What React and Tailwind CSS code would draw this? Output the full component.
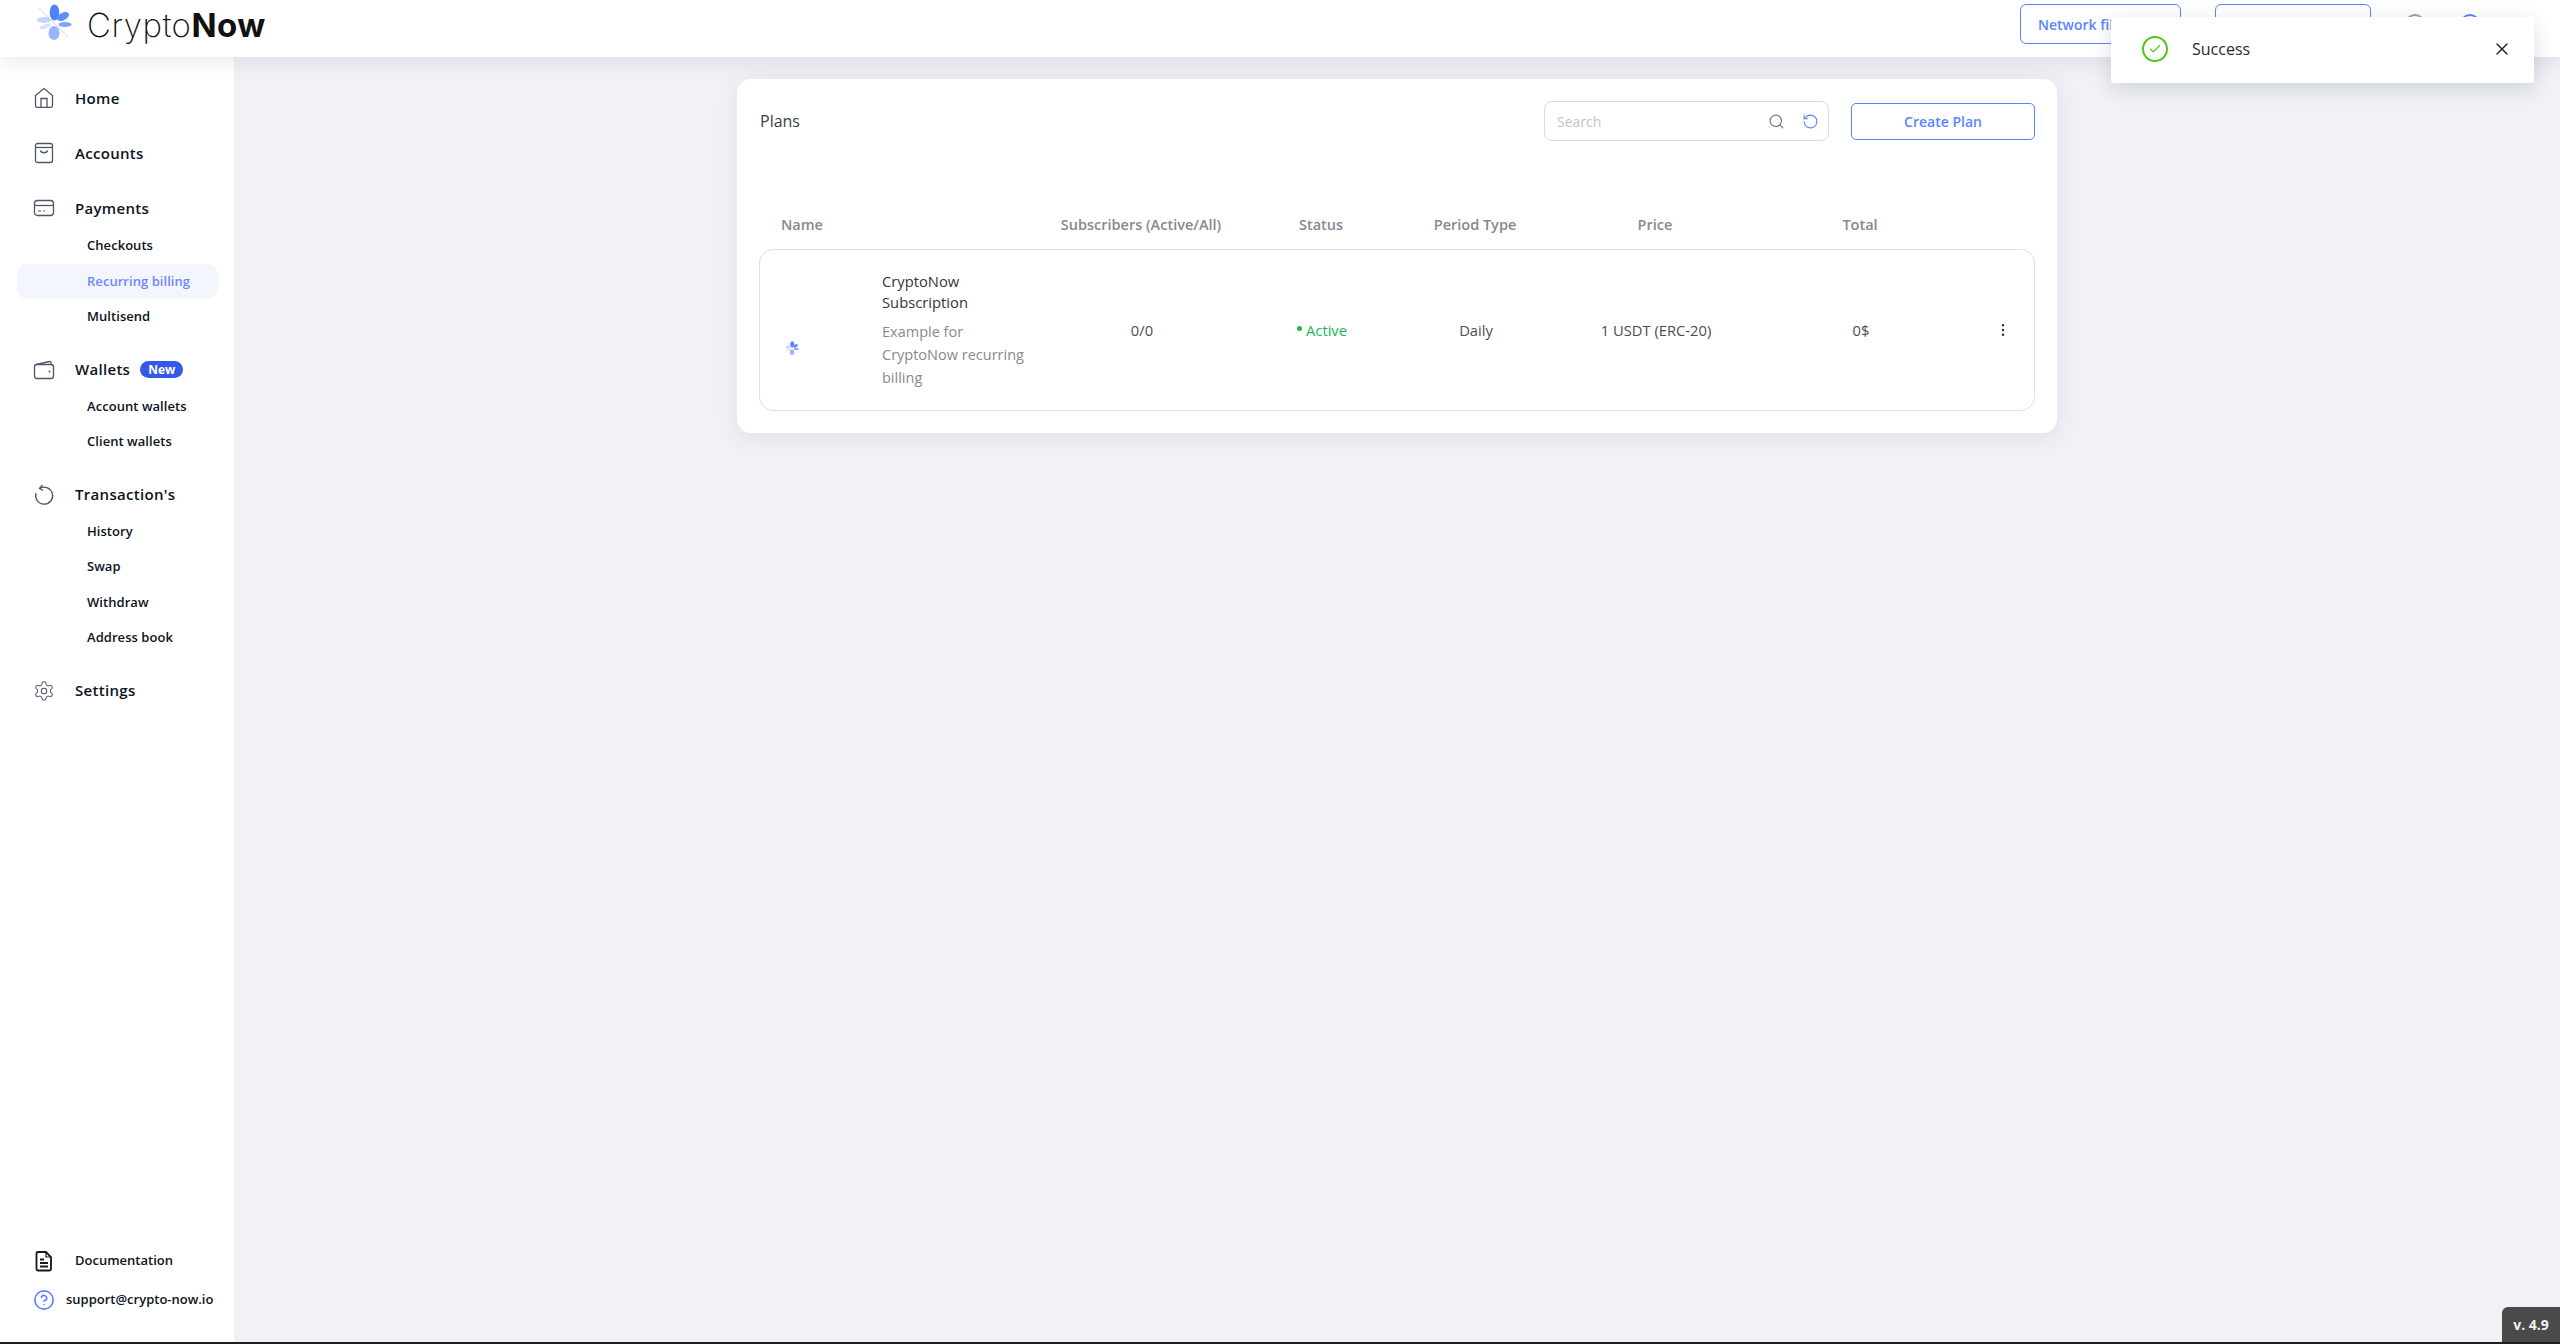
import React from "react";
import { Search, RotateCcw, EllipsisVertical, X, Check, CircleHelp } from "lucide-react";

const Logo = ({ className }) => (
  <svg viewBox="0 0 36 36" className={className}>
    <line x1="3" y1="4" x2="32" y2="33" stroke="#c9d8ff" strokeWidth="1" />
    <ellipse cx="18.5" cy="8.5" rx="4.8" ry="8" fill="#4f81ff" />
    <ellipse cx="27" cy="12.5" rx="6.5" ry="3.8" fill="#5f8dff" transform="rotate(-28 27 12.5)" />
    <ellipse cx="29" cy="20.5" rx="6.5" ry="2.4" fill="#7ea3ff" />
    <ellipse cx="18" cy="29" rx="5.5" ry="7" fill="#98b6ff" />
    <ellipse cx="8" cy="16" rx="7" ry="3" fill="#c4d5ff" />
    <ellipse cx="9" cy="22.5" rx="6" ry="2" fill="#d3e0ff" transform="rotate(-20 9 22.5)" />
  </svg>
);

const iconCls = "w-[22px] h-[22px] text-[#4b5666]";

const HomeIcon = () => (
  <svg viewBox="0 0 22 22" fill="none" stroke="currentColor" strokeWidth="1.3" className={iconCls}>
    <path d="M2.5 8.6 11 1.6l8.500 7v10a1.700 1.700 0 0 1-1.700 1.700H4.200a1.700 1.700 0 0 1-1.700-1.700z" />
    <path d="M8 20.300v-8.800h6v8.800" />
  </svg>
);

const BagIcon = () => (
  <svg viewBox="0 0 22 22" fill="none" stroke="currentColor" strokeWidth="1.3" className={iconCls}>
    <rect x="2.500" y="1.500" width="17" height="19" rx="2" />
    <path d="M2.500 5.500h17" />
    <path d="M7.500 8.500c.6 3 6.400 3 7 0" />
  </svg>
);

const CardIcon = () => (
  <svg viewBox="0 0 22 22" fill="none" stroke="currentColor" strokeWidth="1.3" className={iconCls}>
    <rect x="1.500" y="3.500" width="19" height="15" rx="3" />
    <path d="M1.500 8.500h19" />
    <path d="M5 14h3M10 14h2" strokeWidth="1" />
  </svg>
);

const WalletIcon = () => (
  <svg viewBox="0 0 22 22" fill="none" stroke="currentColor" strokeWidth="1.3" className={iconCls}>
    <path d="M3 5.500 16.500 2.500c.8-.2 1.500.3 1.500 1.200v2" />
    <rect x="1.500" y="5.500" width="19" height="14" rx="2.500" />
    <circle cx="16.500" cy="12.500" r="1" fill="currentColor" stroke="none" />
  </svg>
);

const HistoryIcon = () => (
  <svg viewBox="0 0 22 22" fill="none" stroke="currentColor" strokeWidth="1.3" className={iconCls}>
    <path d="M7 4.300a8.500 8.500 0 1 1-4 5" />
    <path d="M9.500 1 6.500 4.300l3.500 2.200" />
  </svg>
);

const GearIcon = () => (
  <svg viewBox="0 0 24 24" fill="none" stroke="currentColor" strokeWidth="1.100" className="w-[24px] h-[24px] text-[#4b5666]">
    <path d="M12.200 2h-.440a2 2 0 0 0-2 2v.180a2 2 0 0 1-1 1.730l-.430.250a2 2 0 0 1-2 0l-.150-.080a2 2 0 0 0-2.730.730l-.220.380a2 2 0 0 0 .730 2.730l.150.100a2 2 0 0 1 1 1.720v.510a2 2 0 0 1-1 1.740l-.150.090a2 2 0 0 0-.730 2.730l.220.380a2 2 0 0 0 2.730.730l.150-.080a2 2 0 0 1 2 0l.430.250a2 2 0 0 1 1 1.730V20a2 2 0 0 0 2 2h.440a2 2 0 0 0 2-2v-.180a2 2 0 0 1 1-1.730l.430-.250a2 2 0 0 1 2 0l.150.080a2 2 0 0 0 2.730-.730l.220-.390a2 2 0 0 0-.730-2.730l-.150-.080a2 2 0 0 1-1-1.740v-.500a2 2 0 0 1 1-1.740l.150-.090a2 2 0 0 0 .730-2.730l-.220-.380a2 2 0 0 0-2.730-.730l-.150.080a2 2 0 0 1-2 0l-.430-.250a2 2 0 0 1-1-1.730V4a2 2 0 0 0-2-2z" />
    <circle cx="12" cy="12" r="3" />
  </svg>
);

const DocIcon = () => (
  <svg viewBox="0 0 22 22" fill="none" stroke="#161616" strokeWidth="1.800" className="w-[22px] h-[22px]">
    <path d="M5 2h8l5 5v12a1.500 1.500 0 0 1-1.500 1.500h-11.500A1.500 1.500 0 0 1 3.500 19V3.500A1.500 1.500 0 0 1 5 2z" />
    <path d="M13 2v5h5" strokeWidth="1.200" />
    <path d="M7 9.500h4M7 13h8M7 16.500h8" />
  </svg>
);

const NavGroup = ({ icon, label, badge, subs = [], active, className = "", subsClass = "mt-[2px]" }) => (
  <div className={className}>
    <div className="h-[36px] flex items-center pl-[33px]">
      <span className="w-[22px] flex justify-center">{icon}</span>
      <span className="ml-[20px] text-[15px] font-semibold text-[#0c1422] tracking-[0.3px]">{label}</span>
      {badge && (
        <span className="ml-[10px] h-[17px] px-[8px] rounded-full bg-[#3558e8] text-white text-[12px] font-bold flex items-center">
          {badge}
        </span>
      )}
    </div>
    {subs.length > 0 && (
      <div className={subsClass}>
        {subs.map((s) => (
          <div
            key={s}
            className={`h-[35.5px] ml-[17px] w-[201px] pl-[70px] flex items-center rounded-[10px] text-[13px] font-semibold tracking-[0.05px] ${
              s === active ? "bg-[#f3f6fc] text-[#6f86ff]" : "text-[#0c1422]"
            }`}
          >
            {s}
          </div>
        ))}
      </div>
    )}
  </div>
);

const Sidebar = () => (
  <aside className="w-[234px] shrink-0 bg-white flex flex-col pt-[23px] pb-[31px]">
    <nav className="flex flex-col gap-[18px]">
      <NavGroup icon={<HomeIcon />} label="Home" className="mb-px" />
      <NavGroup icon={<BagIcon />} label="Accounts" className="mb-px" />
      <NavGroup
        icon={<CardIcon />}
        label="Payments"
        subs={["Checkouts", "Recurring billing", "Multisend"]}
        active="Recurring billing"
      />
      <NavGroup
        icon={<WalletIcon />}
        label="Wallets"
        badge="New"
        subs={["Account wallets", "Client wallets"]}
        className="-mt-px"
        subsClass="mt-px"
      />
      <NavGroup
        icon={<HistoryIcon />}
        label="Transaction's"
        subs={["History", "Swap", "Withdraw", "Address book"]}
        className="-mt-px"
        subsClass="mt-px"
      />
      <NavGroup icon={<GearIcon />} label="Settings" className="-mt-px" />
    </nav>
    <div className="mt-auto flex flex-col gap-[17px] pl-[33px] text-[13px] font-semibold text-[#0c1422]">
      <div className="h-[22px] flex items-center">
        <DocIcon />
        <span className="ml-[20px]">Documentation</span>
      </div>
      <div className="h-[22px] flex items-center">
        <CircleHelp className="w-[22px] h-[22px] text-[#5a84ff]" strokeWidth={1.8} />
        <span className="ml-[11px]">support@crypto-now.io</span>
      </div>
    </div>
  </aside>
);

const Header = () => (
  <header className="relative z-10 h-[57px] shrink-0 bg-white shadow-[0_2px_24px_rgba(60,70,90,0.14)] flex items-start">
    <div className="flex items-center pl-[36px] h-[44px]">
      <Logo className="w-[36px] h-[38px]" />
      <span className="ml-[15px] mt-[6px] text-[33px] leading-none text-[#111] font-['Inter',sans-serif] font-extralight tracking-[0.5px]">
        Crypto<span className="font-bold">Now</span>
      </span>
    </div>
    <div className="ml-auto flex items-start pt-[4px]">
      <button className="w-[161px] h-[40px] border border-[#5a84ff] rounded-[6px] text-left pl-[17px] text-[14px] font-semibold text-[#5a84ff]">
        Network filter
      </button>
      <button className="ml-[34px] w-[156px] h-[40px] border border-[#5a84ff] rounded-[6px]" />
      <span className="ml-[34px] mt-[10px] w-[20px] h-[20px] rounded-full border-2 border-[#9aa2ad]" />
      <span className="ml-[35px] mt-[10px] mr-[80px] w-[20px] h-[20px] rounded-full border-2 border-[#5a84ff]" />
    </div>
  </header>
);

const tableCols = "grid grid-cols-[282px_200px_160px_148px_212px_198px_1fr]";

const Plans = () => (
  <section className="w-[1320px] mx-auto mt-[22px] h-[354px] bg-white rounded-[14px] px-[22px] shadow-[0_4px_24px_rgba(60,70,90,0.1)]">
    <div className="flex items-center pt-[22px]">
      <h2 className="pl-px text-[16px] font-medium text-[#3c3f45]">Plans</h2>
      <div className="ml-auto w-[285px] h-[40px] border border-[#dcdcde] rounded-[8px] flex items-center pl-[12px] pr-[9px]">
        <input
          placeholder="Search"
          className="flex-1 min-w-0 text-[14px] outline-none placeholder:text-[#c4c4c4] bg-transparent"
        />
        <Search className="w-[17px] h-[17px] text-[#6b7280]" strokeWidth={1.6} />
        <RotateCcw className="ml-[17px] w-[17px] h-[17px] text-[#5a84ff]" strokeWidth={1.5} />
      </div>
      <button className="ml-[22px] w-[184px] h-[37px] border border-[#5a84ff] rounded-[5px] text-[14px] font-semibold text-[#5a84ff]">
        Create Plan
      </button>
    </div>
    <div className={`${tableCols} mt-[73px] h-[22px] items-center text-[14.5px] font-semibold text-[#858992] text-center`}>
      <div className="text-left pl-[22px]">Name</div>
      <div className="whitespace-nowrap">Subscribers (Active/All)</div>
      <div>Status</div>
      <div>Period Type</div>
      <div>Price</div>
      <div>Total</div>
      <div />
    </div>
    <div className={`${tableCols} mt-[13px] h-[162px] border border-[#dfe0e3] rounded-[14px] items-center text-[14.75px] text-[#4a4d52] text-center`}>
      <div className="flex items-center text-left">
        <Logo className="ml-[25px] w-[14px] h-[14px] mt-[36px]" />
        <div className="ml-[83px] w-[160px]">
          <div className="leading-[21px] font-medium text-[#33363b]">CryptoNow Subscription</div>
          <div className="mt-[7px] text-[14.5px] leading-[23px] text-[#868a91] w-[150px]">Example for CryptoNow recurring billing</div>
        </div>
      </div>
      <div>0/0</div>
      <div className="flex items-center justify-center text-[#22b455]">
        <span className="w-[5px] h-[5px] rounded-full bg-[#22b455] mr-[4px] -mt-[3px]" />
        Active
      </div>
      <div>Daily</div>
      <div>1 USDT (ERC-20)</div>
      <div>0$</div>
      <div className="flex justify-end pr-[23px]">
        <EllipsisVertical className="w-[16px] h-[16px] text-[#33363b]" strokeWidth={1.8} />
      </div>
    </div>
  </section>
);

const Toast = () => (
  <div className="absolute z-20 left-[2111px] top-[17px] w-[423px] h-[66px] bg-white rounded-[3px] shadow-[0_6px_20px_rgba(40,50,70,0.16)] flex items-center pb-[2px] pl-[31px] pr-[22px]">
    <span className="w-[26px] h-[26px] rounded-full border-[2.5px] border-[#52c41a] flex items-center justify-center">
      <Check className="w-[14px] h-[14px] text-[#52c41a]" strokeWidth={2} />
    </span>
    <span className="ml-[24px] text-[16px] text-[#2a2a2a]">Success</span>
    <X className="ml-auto w-[20px] h-[20px] text-[#222]" strokeWidth={1.8} />
  </div>
);

const App = () => (
  <div className="relative h-screen overflow-hidden bg-[#1f1f1f] font-['Open_Sans','Noto_Sans',sans-serif]">
    <div className="h-[1342px] flex flex-col bg-[#f0f2f6]">
      <Header />
      <div className="flex flex-1 min-h-0">
        <Sidebar />
        <main className="flex-1 min-w-0">
          <Plans />
        </main>
      </div>
    </div>
    <Toast />
    <div className="absolute left-[2502px] top-[1307px] w-[58px] h-[35px] bg-[#4a4a4a] rounded-tl-[6px] flex items-center justify-center text-[14px] font-bold text-[#f2f2f2]">
      v. 4.9
    </div>
  </div>
);

export default App;
